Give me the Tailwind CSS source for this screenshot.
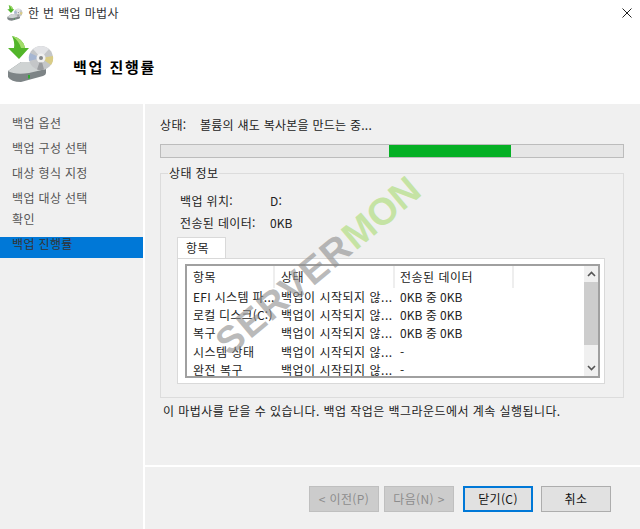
<!DOCTYPE html>
<html lang="ko">
<head>
  <meta charset="UTF-8" />
  <title>한 번 백업 마법사</title>
  <script src="https://cdn.jsdelivr.net/npm/@tailwindcss/browser@4"></script>
</head>
<body class="bg-white">
  <div class="relative w-[640px] h-[529px] overflow-hidden bg-white text-[12px] leading-[18px] text-[#222] font-['Noto_Sans_CJK_KR','Noto_Sans',sans-serif] tracking-[0.35px]">

    <!-- 헤더 -->
    <header class="h-[104px] bg-white">
      <div class="flex items-center h-[26px] pl-[7px] gap-[5px]">
        <svg class="w-[16px] h-[16px]" viewBox="0 0 48 48"><use href="#backup-icon" /></svg>
        <span class="text-[#333]">한 번 백업 마법사</span>
        <svg class="ml-auto mr-[8px] w-[10px] h-[10px]" viewBox="0 0 10 10"><path d="M0.5 0.5 L9.5 9.5 M9.5 0.5 L0.5 9.5" stroke="#222" stroke-width="1" fill="none" /></svg>
      </div>
      <div class="flex items-center pl-[7px] mt-[9px]">
        <svg class="w-[48px] h-[48px]" viewBox="0 0 48 48">
          <defs>
            <g id="backup-icon">
              <path d="M1 36 L14 27 L32 27 L39 34 L39 38 Q39 40 36 41 L14 47 Q4 47 1 42 Z" fill="#7d8486" />
              <path d="M1 36 L14 27 L32 27 L39 34 L22 38 Q8 40 1 36 Z" fill="#cfd3d3" />
              <rect x="21" y="40" width="2" height="3.5" fill="#2fa82f" />
              <circle cx="34" cy="23" r="12" fill="#c4c6c8" />
              <path d="M34 23 L26 14 A12 12 0 0 1 42 14 Z" fill="#e2e3e6" />
              <path d="M34 23 L46 21 A12 12 0 0 1 44 30 Z" fill="#d9cc86" />
              <path d="M34 23 L22 26 A12 12 0 0 1 23 18 Z" fill="#a6b6d2" />
              <path d="M34 23 L30 34.5 A12 12 0 0 0 37 34.5 Z" fill="#9a9c9f" />
              <circle cx="34" cy="23" r="4.5" fill="#f0f0f0" />
              <circle cx="34" cy="23" r="2" fill="#85888b" />
              <path d="M5 1 Q16 3 18 13 L22 13 L12 24 L1 13 L7 13 Q8 7 5 1 Z" fill="#52b52a" />
              <path d="M5 1 Q16 3 18 13 L14 13 Q12 6 5 1 Z" fill="#a2dc6a" />
            </g>
          </defs>
          <use href="#backup-icon" />
        </svg>
        <h1 class="ml-[18px] mt-[16px] text-[15px] font-bold text-black tracking-[1.6px]">백업 진행률</h1>
      </div>
    </header>

    <div class="flex h-[425px] bg-[#f0f0f0]">
      <!-- 단계 목록 -->
      <nav class="w-[143px] pt-[10px] text-[#555]">
        <div class="h-[25px] pl-[12px]">백업 옵션</div>
        <div class="h-[25px] pl-[12px]">백업 구성 선택</div>
        <div class="h-[25px] pl-[12px]">대상 형식 지정</div>
        <div class="h-[21px] pl-[12px]">백업 대상 선택</div>
        <div class="h-[27px] pl-[12px]">확인</div>
        <div class="h-[21px] pl-[12px] bg-[#0078d7] leading-[13px] text-[#333]">백업 진행률</div>
      </nav>
      <div class="w-[2px] bg-white"></div>

      <main class="flex-1 flex flex-col">
        <div class="h-[361px] pl-[15px] pt-[12px]">
          <div class="flex h-[18px]">
            <span class="w-[40px]">상태:</span>
            <span class="tracking-[0.25px]">볼륨의 섀도 복사본을 만드는 중...</span>
          </div>
          <!-- 진행 표시줄 -->
          <div class="mt-[10px] w-[464px] h-[14px] bg-[#e6e6e6] border border-[#bcbcbc] pl-[228px]">
            <div class="w-[122px] h-full bg-[#06b025]"></div>
          </div>

          <!-- 상태 정보 -->
          <fieldset class="mt-[7px] w-[464px] h-[233px] border border-[#dcdcdc] pl-[16px] pr-[18px]">
            <legend class="ml-[-9px] px-[1px] text-[#222] leading-[16px]">상태 정보</legend>
            <div class="flex mt-[11px] h-[22px] pl-[3px]"><span class="w-[90px]">백업 위치:</span><span>D:</span></div>
            <div class="flex h-[22px] pl-[3px]"><span class="w-[90px]">전송된 데이터:</span><span class="tracking-[0]">0KB</span></div>

            <!-- 탭 -->
            <div class="mt-[1px] w-[49px] h-[21px] bg-white border border-b-0 border-[#d9d9d9] pl-[8px] leading-[20px]">항목</div>
            <div class="w-[428px] h-[126px] bg-white border border-[#d9d9d9] px-[7px] pt-[5px]">
              <div class="relative w-[415px] h-[114px] border-2 border-[#a0a0a0] bg-white overflow-hidden tracking-[0.5px]">
                <div class="flex h-[22px]">
                  <span class="w-[88px] pl-[6px] border-r-2 border-[#eeeeee] leading-[21px]">항목</span>
                  <span class="w-[120px] pl-[6px] border-r-2 border-[#eeeeee] leading-[21px]">상태</span>
                  <span class="w-[119px] pl-[5px] border-r-2 border-[#eeeeee] leading-[21px]">전송된 데이터</span>
                </div>
                <div class="flex h-[18px]"><span class="w-[88px] pl-[6px] whitespace-nowrap tracking-[0.3px]">EFI 시스템 파...</span><span class="w-[120px] pl-[6px] whitespace-nowrap">백업이 시작되지 않...</span><span class="pl-[5px] tracking-[0]">0KB 중 0KB</span></div>
                <div class="flex h-[18px]"><span class="w-[88px] pl-[6px] whitespace-nowrap tracking-[0.2px]">로컬 디스크(C:)</span><span class="w-[120px] pl-[6px] whitespace-nowrap">백업이 시작되지 않...</span><span class="pl-[5px] tracking-[0]">0KB 중 0KB</span></div>
                <div class="flex h-[18px]"><span class="w-[88px] pl-[6px] whitespace-nowrap">복구</span><span class="w-[120px] pl-[6px] whitespace-nowrap">백업이 시작되지 않...</span><span class="pl-[5px] tracking-[0]">0KB 중 0KB</span></div>
                <div class="flex h-[19px] items-end"><span class="w-[88px] pl-[6px] whitespace-nowrap">시스템 상태</span><span class="w-[120px] pl-[6px] whitespace-nowrap">백업이 시작되지 않...</span><span class="pl-[5px]">-</span></div>
                <div class="flex h-[18px]"><span class="w-[88px] pl-[6px] whitespace-nowrap">완전 복구</span><span class="w-[120px] pl-[6px] whitespace-nowrap">백업이 시작되지 않...</span><span class="pl-[5px]">-</span></div>

                <!-- 스크롤바 -->
                <div class="absolute right-0 top-0 bottom-0 w-[14px] bg-[#f0f0f0] flex flex-col">
                  <div class="h-[16px] flex items-center justify-center">
                    <svg class="w-[9px] h-[6px]" viewBox="0 0 9 6"><path d="M1 5 L4.5 1.5 L8 5" fill="none" stroke="#555" stroke-width="1.6" /></svg>
                  </div>
                  <div class="h-[63px] bg-[#cdcdcd]"></div>
                  <div class="flex-1 flex items-end justify-center pb-[5px]">
                    <svg class="w-[9px] h-[6px]" viewBox="0 0 9 6"><path d="M1 1 L4.5 4.5 L8 1" fill="none" stroke="#555" stroke-width="1.6" /></svg>
                  </div>
                </div>
              </div>
            </div>
          </fieldset>

          <p class="mt-[4px] pl-[3px] whitespace-nowrap tracking-[0.44px]">이 마법사를 닫을 수 있습니다. 백업 작업은 백그라운드에서 계속 실행됩니다.</p>
        </div>

        <div class="h-[2px] bg-white"></div>

        <!-- 버튼 -->
        <div class="flex pl-[164px] pt-[19px]">
          <button class="w-[70px] h-[26px] bg-[#cccccc] border border-[#bfbfbf] text-[#8c8c8c]">&lt; 이전(P)</button>
          <button class="ml-[5px] w-[70px] h-[26px] bg-[#cccccc] border border-[#bfbfbf] text-[#8c8c8c]">다음(N) &gt;</button>
          <button class="ml-[9px] w-[70px] h-[26px] bg-[#e1e1e1] border-2 border-[#0078d7] text-[#111]">닫기(C)</button>
          <button class="ml-[8px] w-[70px] h-[26px] bg-[#e1e1e1] border border-[#adadad] text-[#111]">취소</button>
        </div>
      </main>
    </div>

    <!-- 워터마크 -->
    <div class="absolute left-[221px] top-[327px] origin-left rotate-[-40deg] flex items-center whitespace-nowrap text-[38px] leading-[40px] font-bold tracking-[1.5px] font-['Liberation_Sans',sans-serif] pointer-events-none">
      <span class="text-[#8c8c8c]/60">SERVER</span>
      <span class="text-[#b9e08f]/80 tracking-[0]">MON</span>
    </div>
  </div>
</body>
</html>
